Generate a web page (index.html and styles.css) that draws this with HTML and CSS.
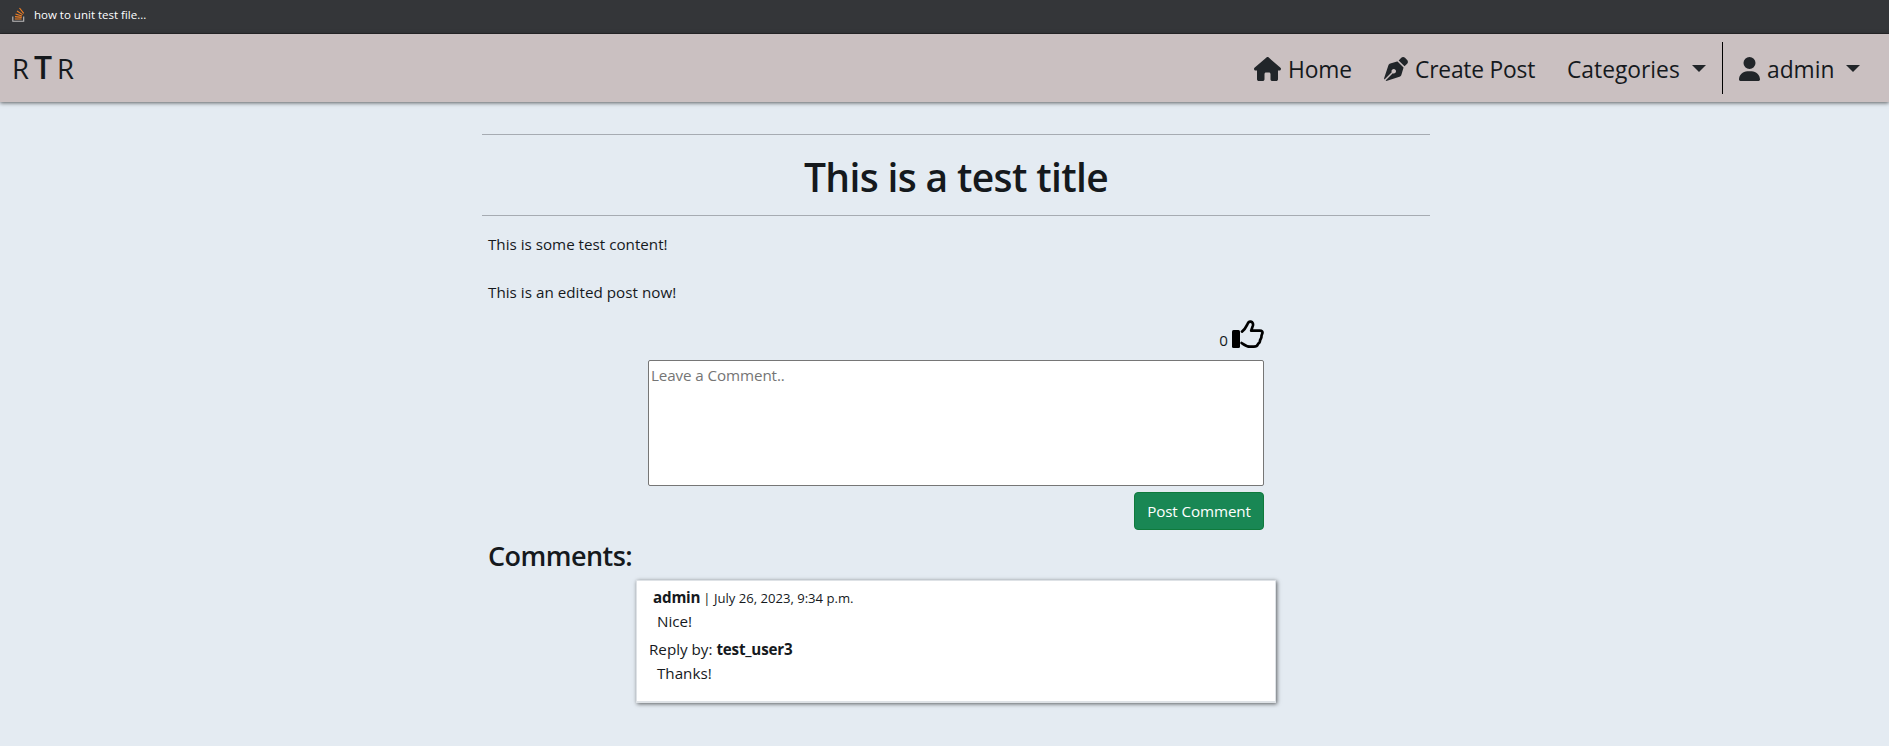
FILE: index.html
```html
<!DOCTYPE html>
<html lang="en">
<head>
<meta charset="utf-8">
<title>This is a test title</title>
<link rel="stylesheet" href="styles.css">
</head>
<body>
<div class="bookmarks">
  <svg class="so" viewBox="0 0 13 15" width="13" height="15" fill="none"><path d="M.8 9.500v4.700h10.900V9.500" stroke="#bcbbbb" stroke-width="1.100"/><path d="M2.800 12h6.800M3 9.600l6.700.8M3.500 6.900l6.400 2M5 4l5.600 3.600M7.500 1l4.200 5.400" stroke="#f48024" stroke-width="1.100"/></svg>
  <span class="bm-text">how to unit test file...</span>
</div>
<nav class="navbar">
  <a class="brand"><span>R</span><span class="big">T</span><span>R</span></a>
  <div class="links">
    <a class="link home"><svg width="27" height="24" viewBox="0 0 576 512"><path d="M575.800 255.500c0 18-15 32.100-32 32.100h-32l.7 160.200c0 2.700-.2 5.400-.5 8.100V472c0 22.100-17.900 40-40 40H392c-22.100 0-40-17.900-40-40V360c0-17.700-14.300-32-32-32h-64c-17.700 0-32 14.300-32 32v112c0 22.100-17.900 40-40 40h-80c-22.100 0-40-17.900-40-40V287.600H32c-18 0-32-14-32-32.100 0-9 3-17 10-24L266.400 8c7-7 15-8 22-8s15 2 21 7l255.400 224.500c8 7 12 15 11 24z"/></svg><span>Home</span></a>
    <a class="link create"><svg width="24" height="24" viewBox="0 0 512 512"><path d="M368.400 18.300 312.700 74.100 437.900 199.300l55.700-55.700c21.900-21.900 21.900-57.300 0-79.200L447.600 18.300c-21.900-21.900-57.300-21.900-79.200 0zM288 94.600l-9.200 2.800L134.700 140.600c-19.900 6-35.700 21.200-42.300 41L3.800 445.800c-3.800 11.300-1 23.900 7.300 32.400L164.700 324.700c-3-6.300-4.700-13.300-4.700-20.700 0-26.500 21.500-48 48-48s48 21.500 48 48-21.500 48-48 48c-7.400 0-14.400-1.700-20.700-4.700L33.700 500.900c8.600 8.300 21.100 11.200 32.400 7.300l264.300-88.600c19.700-6.600 35-22.400 41-42.300l43.200-144.100 2.700-9.200L288 94.600z"/></svg><span>Create Post</span></a>
    <a class="link cats"><span>Categories</span><i class="caret"></i></a>
    <a class="link user"><svg width="21" height="24" viewBox="0 0 448 512"><path d="M224 256a128 128 0 1 0 0-256 128 128 0 1 0 0 256zm-45.700 48C79.800 304 0 383.800 0 482.300 0 498.700 13.300 512 29.700 512h388.600c16.400 0 29.700-13.300 29.700-29.700C448 383.800 368.200 304 269.700 304h-91.400z"/></svg><span>admin</span><i class="caret"></i></a>
  </div>
</nav>
<main class="post">
  <h1 class="title"><span>This is a test title</span></h1>
  <div class="content">
    <p class="p1">This is some test content!</p>
    <p class="p2">This is an edited post now!</p>
  </div>
  <section class="form">
    <div class="likes"><span>0</span><svg width="34" height="30" viewBox="0 0 34 30"><path d="M2 11.500q0-1.500 1.500-1.500H8.500q1.500 0 1.500 1.500v15q0 1.500-1.500 1.500H3.500q-1.500 0-1.500-1.500z"/><path d="M12 11.600c2.600-1.800 3.900-4.200 5.100-6.700.9-2.600 2-3.700 3.700-3.300 2 .5 2.600 2.400 2 4.300l-1.600 4.700h8.500c2.300 0 3.200 1.200 2.600 2.900-.2.900-.7 1.500-.8 2.400-.1.800.1 1.300-.4 2.200l-1 2.100c-.2.800 0 1.500-.6 2.200-.6.900-1.200 1.100-1.600 1.900-.8 2.100-1.700 2.400-4 2.400h-4c-3.200 0-5.200-1.600-8.300-3.700" fill="none" stroke="#000" stroke-width="2.700" stroke-linecap="round" stroke-linejoin="round"/></svg></div>
    <textarea class="box" placeholder="Leave a Comment.."></textarea>
    <button class="submit">Post Comment</button>
  </section>
  <h3 class="heading">Comments:</h3>
  <article class="card">
    <div class="meta"><b class="admin">admin</b> <small>| July 26, 2023, 9:34 p.m.</small></div>
    <div class="body">Nice!</div>
    <div class="reply">Reply by: <b>test_user3</b></div>
    <div class="body thanks">Thanks!</div>
  </article>
</main>
</body>
</html>
```
FILE: styles.css
```css
* { box-sizing: border-box; }
body { margin: 0; min-height: 746px; background: #e4ebf2; color: #15191d; font: 15.2px/24px "Open Sans", "Noto Sans", sans-serif; }
.bookmarks { height: 34px; background: #343639; border-bottom: 1px solid #29292c; color: #fff; display: flex; align-items: flex-start; padding: 7px 0 0 12px; }
.bm-text { font-size: 11.5px; line-height: 16px; margin-left: 9px; }
.navbar { height: 68px; background: #cac0c1; display: flex; justify-content: space-between; position: relative; box-shadow: 0 1px 4px rgba(0,0,0,.6); }
.brand { display: flex; align-items: baseline; padding: 13px 0 0 12px; font-size: 27.5px; line-height: 40px; }
.brand span { width: 22px; font-weight: 400; }
.brand .big { width: 23px; font-size: 32px; font-weight: 600; }
.links { display: flex; padding-top: 8px; }
.link { display: flex; height: 52px; align-items: flex-start; font-size: 22.8px; line-height: 32px; white-space: nowrap; }
.link svg { margin-top: 15px; flex: none; fill: #212529; }
.link span { margin: 12px 0 0 7px; }
.home { width: 130px; letter-spacing: -.1px; }
.create { width: 183px; letter-spacing: -.2px; }
.cats { width: 156px; border-right: 1px solid #000; }
.user { padding-left: 16px; width: 166px; }
.cats span { margin-left: 0; width: 125px; }
.user span { width: 79px; }
.caret { border: 7px solid transparent; border-top-color: #212529; border-bottom: 0; margin-top: 23px; }
.post { width: 948px; margin: 32px auto 0 482px; }
.title { margin: 0; height: 82px; border-top: 1px solid #a6abb2; border-bottom: 1px solid #a6abb2; text-align: center; font-size: 39px; font-weight: 550; line-height: 84px; letter-spacing: -.65px; }
.content { padding: 16px 6px 0; }
.content p { margin: 0 0 24px; }
.content .p2 { letter-spacing: .03px; }
.form { width: 616px; margin: -10px 0 0 166px; display: flex; flex-direction: column; }
.likes { display: flex; height: 42px; justify-content: flex-end; }
.likes span { margin: 10px 2px 0 0; }
.likes svg { margin-top: 2px; }
.box { height: 126px; border: 1px solid #767676; border-radius: 2px; padding: 2px; resize: none; background: #fff; font: inherit; letter-spacing: -.1px; }
.box::placeholder { color: #757575; }
.submit { align-self: flex-end; margin-top: 6px; width: 130px; height: 38px; padding: 0; background: #198754; border: 1px solid #0f7a3c; border-radius: 4px; color: #fff; font: inherit; letter-spacing: -.1px; }
.heading { margin: 9px 0 0 6px; font-size: 27px; font-weight: 550; line-height: 34px; letter-spacing: -.55px; }
.card { width: 640px; height: 123px; margin: 7px 0 0 154px; padding: 4px 12px; background: #fff; border: 1px solid #dee2e6; border-bottom-width: 2px; box-shadow: 1px 1px 4px rgba(0,0,0,.6); }
.card b { letter-spacing: -.2px; }
.meta { padding-left: 4px; }
.meta small { font-size: 13.1px; margin-left: -1px; }
.body { padding-left: 8px; margin-top: -1px; }
.reply { margin-top: 4px; }
.thanks { margin-top: 0; }
```
